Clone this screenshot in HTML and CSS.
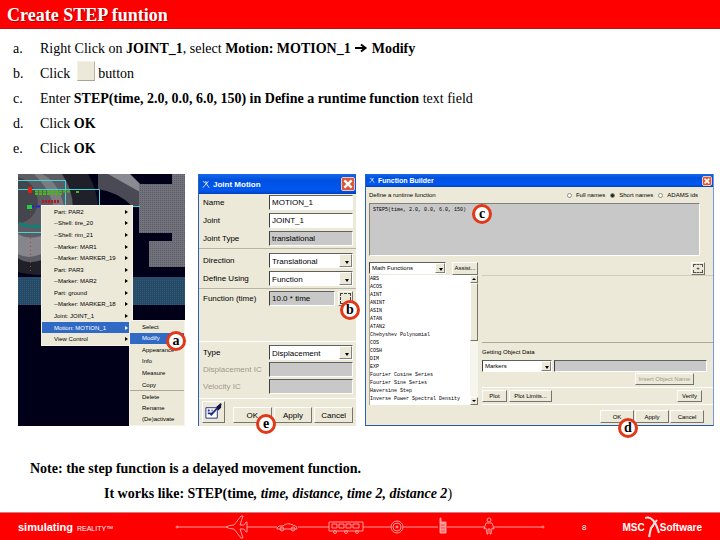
FILE: index.html
```html
<!DOCTYPE html>
<html lang="en">
  <head>
    <meta charset="UTF-8" />
    <meta name="viewport" content="width=device-width, initial-scale=1.0" />
    <title>Create STEP funtion</title>
    <link rel="stylesheet" href="styles.css">
  </head>
  <body>
    <header class="title-bar">
      <h1>Create STEP funtion</h1>
    </header>

    <main>
      <ul class="steps">
        <li><span class="letter">a.</span><span>Right Click on <b>JOINT_1</b>, select <b>Motion: MOTION_1 <svg class="arrow" viewBox="0 0 14 10"><path d="M1 5H11M7 1.5L11.5 5L7 8.5" /></svg> Modify</b></span></li>
        <li><span class="letter">b.</span><span>Click</span><button class="blank" type="button" aria-label="Function"></button><span>button</span></li>
        <li><span class="letter">c.</span><span>Enter <b>STEP(time, 2.0, 0.0, 6.0, 150) in Define a runtime function</b> text field</span></li>
        <li><span class="letter">d.</span><span>Click <b>OK</b></span></li>
        <li><span class="letter">e.</span><span>Click <b>OK</b></span></li>
      </ul>

      <div class="figures">
        <!-- model view with the context menu -->
        <section class="scene">
          <svg class="model" viewBox="0 0 167 252" preserveAspectRatio="none">
            <defs>
              <pattern id="dots" width="2" height="2" patternUnits="userSpaceOnUse">
                <rect width="2" height="2" fill="#72727c" />
                <rect width="1" height="1" fill="#5c5c68" />
              </pattern>
              <pattern id="floor" width="2" height="2" patternUnits="userSpaceOnUse">
                <rect width="2" height="2" fill="#234a68" />
                <rect width="1" height="1" fill="#36596e" />
              </pattern>
            </defs>
            <rect width="167" height="252" fill="#000018" />
            <rect y="103" width="167" height="28" fill="url(#floor)" />
            <path d="M0 0H70Q82 20 80 45Q75 80 40 98Q20 104 0 98Z" fill="#20202a" />
            <path d="M0 0H44Q58 20 54 45Q44 82 20 87Q8 90 0 84Z" fill="#5c5c64" />
            <path d="M0 3Q18 8 20 28Q18 46 0 50Z" fill="#45454e" />
            <path d="M24 0Q44 10 47 40L38 62Q42 25 16 0Z" fill="#7b7b82" />
            <path d="M0 60Q10 66 23 62V80Q10 86 0 80Z" fill="#85858b" />
            <path d="M80 0H112L122 10V33L114 32Q100 18 80 15Z" fill="#4a4a55" />
            <path d="M90 0H112L122 10V18Z" fill="#8a8a92" />
            <path d="M154 0H167V93H131V67H154V59H121V10H154Z" fill="url(#dots)" />
            <g fill="none" stroke="#45d5d8">
              <path d="M0 6.500H47.500V32M0 15.500H81.500V32M23 32.500H122M0 58.500H23" />
              <path d="M1 49Q10 54 23 52" stroke="#108078" stroke-width="3" />
            </g>
            <path d="M12.500 36V100" stroke="#a04040" stroke-dasharray="1 3" />
            <path d="M12 32.500H40" stroke="#2020e0" stroke-width="2" stroke-dasharray="4 2" />
            <path d="M10 13H14V19H10Z" fill="#e02010" />
            <path d="M17 17.500H52M17 20H45M58 18H62" stroke="#48b818" stroke-width="2" stroke-dasharray="3 1" />
            <path d="M24 27.500H42" stroke="#b01828" stroke-width="3" stroke-dasharray="2 1" />
            <path d="M9 31H14V35H9Z" fill="#20d040" />
          </svg>
          <ul class="menu main-menu">
            <li class="more">Part: PAR2</li>
            <li class="more">--Shell: tire_20</li>
            <li class="more">--Shell: rim_21</li>
            <li class="more">--Marker: MAR1</li>
            <li class="more">--Marker: MARKER_19</li>
            <li class="more">Part: PAR3</li>
            <li class="more">--Marker: MAR2</li>
            <li class="more">Part: ground</li>
            <li class="more">--Marker: MARKER_18</li>
            <li class="more">Joint: JOINT_1</li>
            <li class="more active">Motion: MOTION_1</li>
            <li class="more">View Control</li>
          </ul>
          <ul class="menu sub-menu">
            <li>Select</li>
            <li class="active">Modify</li>
            <li>Appearance</li>
            <li>Info</li>
            <li>Measure</li>
            <li>Copy</li>
            <li class="divided">Delete</li>
            <li>Rename</li>
            <li>(De)activate</li>
          </ul>
          <span class="badge badge-a">a</span>
        </section>

        <!-- Joint Motion dialog -->
        <section class="dialog joint">
          <div class="caption">
            <svg class="app-icon" viewBox="0 0 10 10"><path d="M1 1Q5 2 9 9M8 1L1 9M4 1L7 3" /></svg>
            <h2>Joint Motion</h2>
            <button class="close" type="button" aria-label="Close"><svg viewBox="0 0 10 10"><path d="M2 2L8 8M8 2L2 8" /></svg></button>
          </div>
          <form class="joint-form">
            <div class="group">
              <label for="name">Name</label><input id="name" type="text" value="MOTION_1" />
              <label for="joint">Joint</label><input id="joint" type="text" value="JOINT_1" />
              <label for="jtype">Joint Type</label><input id="jtype" class="gray" type="text" value="translational" readonly />
            </div>
            <div class="group second">
              <label for="dir">Direction</label><span class="drop"><select id="dir"><option>Translational</option></select></span>
              <label for="using">Define Using</label><span class="drop"><select id="using"><option>Function</option></select></span>
            </div>
            <div class="group stretch">
              <label for="fn">Function (time)</label>
              <span class="with-button"><input id="fn" class="gray" type="text" value="10.0 * time" readonly /><button class="raised dots" type="button" aria-label="Build function"></button></span>
            </div>
            <div class="group last">
              <label for="type">Type</label><span class="drop"><select id="type"><option>Displacement</option></select></span>
              <label class="off" for="disp">Displacement IC</label><input id="disp" class="gray" type="text" disabled />
              <label class="off" for="vel">Velocity IC</label><input id="vel" class="gray" type="text" disabled />
            </div>
            <div class="actions">
              <button class="raised note-icon" type="button" aria-label="Comments">
                <svg viewBox="0 0 20 20"><path d="M2 6H14V17H2Z" fill="#fff" stroke="#203080" /><path d="M4 9H6M8 9H9M4 12H8M7 14L18 2" fill="none" stroke="#203080" stroke-width="2" /><path d="M13 5L18 1V6L15 9Z" fill="#101840" /></svg>
              </button>
              <button class="raised" type="button">OK</button>
              <button class="raised" type="button">Apply</button>
              <button class="raised" type="button">Cancel</button>
            </div>
          </form>
          <span class="badge badge-b">b</span>
          <span class="badge badge-e">e</span>
        </section>

        <!-- Function Builder dialog -->
        <section class="dialog builder">
          <div class="caption">
            <svg class="app-icon" viewBox="0 0 10 10"><path d="M1 1Q5 2 9 9M8 1L1 9M4 1L7 3" /></svg>
            <h2>Function Builder</h2>
            <button class="close" type="button" aria-label="Close"><svg viewBox="0 0 10 10"><path d="M2 2L8 8M8 2L2 8" /></svg></button>
          </div>
          <form class="builder-form">
            <div class="define">
              <label for="runtime">Define a runtime function</label>
              <span class="radios">
                <label><input type="radio" name="names" />Full names</label>
                <label><input type="radio" name="names" checked />Short names</label>
                <label><input type="radio" name="names" />ADAMS ids</label>
              </span>
            </div>
            <textarea id="runtime" spellcheck="false">STEP5(time, 2.0, 0.0, 6.0, 150)</textarea>
            <div class="assist">
              <span class="drop"><select aria-label="Function category"><option>Math Functions</option></select></span>
              <button class="raised" type="button">Assist...</button>
              <button class="raised plus" type="button"><span>+</span></button>
            </div>
            <div class="work">
              <div class="functions">
                <ul>
                  <li>ABS</li>
                  <li>ACOS</li>
                  <li>AINT</li>
                  <li>ANINT</li>
                  <li>ASIN</li>
                  <li>ATAN</li>
                  <li>ATAN2</li>
                  <li>Chebyshev Polynomial</li>
                  <li>COS</li>
                  <li>COSH</li>
                  <li>DIM</li>
                  <li>EXP</li>
                  <li>Fourier Cosine Series</li>
                  <li>Fourier Sine Series</li>
                  <li>Haversine Step</li>
                  <li>Inverse Power Spectral Density</li>
                </ul>
                <div class="scroll">
                  <span class="raised up"></span>
                  <span class="raised thumb"></span>
                  <span class="track"></span>
                  <span class="raised down"></span>
                </div>
              </div>
              <div class="side">
                <div class="space"></div>
                <div class="object">
                  <label for="object">Getting Object Data</label>
                  <div class="object-row">
                    <span class="drop"><select id="object"><option>Markers</option></select></span>
                    <input class="gray" type="text" aria-label="Object name" disabled />
                  </div>
                  <button class="raised insert" type="button" disabled>Insert Object Name</button>
                </div>
                <div class="plots">
                  <button class="raised" type="button">Plot</button>
                  <button class="raised limits" type="button">Plot Limits...</button>
                  <button class="raised verify" type="button">Verify</button>
                </div>
              </div>
            </div>
            <div class="actions">
              <button class="raised" type="button">OK</button>
              <button class="raised" type="button">Apply</button>
              <button class="raised" type="button">Cancel</button>
            </div>
          </form>
          <span class="badge badge-c">c</span>
          <span class="badge badge-d">d</span>
        </section>
      </div>

      <div class="notes">
        <p>Note: the step function is a delayed movement function.</p>
        <p class="indent">It works like: STEP(time<i>, time, distance, time 2, distance 2</i><span>)</span></p>
      </div>
    </main>

    <footer>
      <p class="tagline"><b>simulating</b> REALITY™</p>
      <svg class="timeline" viewBox="0 0 372 26">
        <path d="M3 13H52M73 13H103M124 13H155M189 13H217M229 13H264M273 13H310M320 13H368" />
        <circle cx="3" cy="13" r="1" />
        <circle cx="369" cy="13" r="1" />
        <path d="M52 13Q55 11 60 11L67 2H69L66 11H70L72 8H73V18H72L70 15H66L69 24H67L60 15Q55 15 52 13Z" />
        <path d="M103 14Q104 11 109 12Q113 8 119 11Q124 12 123 15H103Z" />
        <circle cx="108" cy="15" r="2" />
        <circle cx="119" cy="15" r="2" />
        <path d="M155 8H189V17H155ZM158 10H163V14H158ZM165 10H170V14H165ZM172 10H177V14H172ZM179 10H185V14H179Z" />
        <circle cx="161" cy="18" r="1.500" />
        <circle cx="172" cy="18" r="1.500" />
        <circle cx="183" cy="18" r="1.500" />
        <circle cx="223" cy="13" r="6" />
        <circle cx="223" cy="13" r="4" />
        <circle class="fill" cx="223" cy="13" r="1" />
        <path class="fill" d="M266 4H267V8H272V19H266Z" />
        <path d="M267 11H271M267 14H271M267 17H271" stroke="#ff4040" />
        <circle cx="315" cy="6" r="2" />
        <path d="M312 9H318L320 15L318 14L317 20H316V15H314V20H313L312 14L310 15Z" />
      </svg>
      <span class="page">8</span>
      <div class="logo">
        <span>MSC</span>
        <svg viewBox="0 0 15 24"><path d="M0 3Q9 0 14 18" stroke-width="2" /><path d="M3 2Q12 5 8 12Q3 16 5 22" /><path d="M12 5L6 13L4 22" stroke-width="2" /></svg>
        <span>Software</span>
      </div>
    </footer>
  </body>
</html>
```

FILE: styles.css
```css
* {
  box-sizing: border-box;
}
body {
  margin: 0;
  min-height: 100vh;
  display: flex;
  flex-direction: column;
  background: #ffffff;
  font-family: "Liberation Serif", "Times New Roman", serif;
  font-size: 14px;
  color: #000000;
}
h1,
h2,
p,
ul {
  margin: 0;
  padding: 0;
  list-style: none;
}
button,
input,
select,
textarea {
  margin: 0;
  padding: 0;
  border: 0;
  border-radius: 0;
  font: inherit;
  color: inherit;
}
main {
  flex: 1;
}

/* header */
.title-bar {
  height: 29px;
  padding: 5px 7px;
  background: #ff0000;
  border-bottom: 1px solid #c01010;
}
.title-bar h1 {
  font-size: 18px;
  line-height: 20px;
  color: #ffffff;
  text-shadow: 1px 1px 1px #a00000;
}

/* steps */
.steps {
  padding: 7px 13px 0;
}
.steps li {
  display: flex;
  align-items: center;
  height: 25px;
}
.letter {
  width: 27px;
}
.arrow {
  width: 14px;
  height: 10px;
  fill: none;
  stroke: #000000;
  stroke-width: 2;
}
.blank {
  width: 18px;
  height: 20px;
  margin: 0 3px 6px 7px;
  background: #ece9d8;
  border: 1px solid #f4f2e8;
  border-right-color: #b8b4a4;
  border-bottom-color: #a8a494;
}

/* three screens */
.figures {
  display: grid;
  grid-template-columns: 171fr 158fr 349fr;
  column-gap: 9px;
  height: 252px;
  margin: 13px 6px 0 18px;
  font-family: "Liberation Sans", Arial, sans-serif;
}
.scene,
.dialog {
  position: relative;
  min-width: 0;
}
.scene {
  margin-right: 4px;
}
.model {
  display: block;
  width: 100%;
  height: 100%;
}
.menu {
  position: absolute;
  display: grid;
  grid-auto-rows: 1fr;
  background: #ece9d8;
  border: 1px solid #f6f4ea;
  font-size: 6px;
  white-space: nowrap;
}
.menu li {
  display: flex;
  align-items: center;
  justify-content: space-between;
}
.menu .active {
  background: #316ac5;
  color: #ffffff;
}
.menu .divided {
  border-top: 1px solid #aca899;
}
.more::after {
  content: "";
  border: 2px solid transparent;
  border-left: 3px solid currentColor;
  border-right: 0;
}
.main-menu {
  left: 23px;
  top: 31px;
  width: 92px;
  height: 141px;
}
.main-menu li {
  padding: 0 4px 0 12px;
}
.sub-menu {
  right: 0;
  bottom: 0;
  width: 56px;
  height: 106px;
}
.sub-menu li {
  padding-left: 12px;
}

/* numbered rings */
.badge {
  position: absolute;
  width: 20px;
  height: 20px;
  border: 3px solid #e03818;
  border-radius: 50%;
  background: #ffffff;
  font: bold 14px/13px "Liberation Serif", serif;
  text-align: center;
}
.badge-a {
  right: -1px;
  top: 157px;
}
.badge-b {
  right: -4px;
  top: 126px;
}
.badge-e {
  left: 57px;
  bottom: -8px;
}
.badge-c {
  left: 106px;
  top: 30px;
}
.badge-d {
  right: 75px;
  bottom: -13px;
}

/* dialogs */
.dialog {
  display: flex;
  flex-direction: column;
  background: #ece9d8;
  border-left: 1px solid #2a60b8;
}
.dialog form {
  flex: 1;
  display: flex;
  flex-direction: column;
}
.caption {
  display: flex;
  align-items: center;
  gap: 3px;
  height: 20px;
  padding: 0 1px 0 3px;
  background: linear-gradient(#1868e8, #0050e0 30%, #0058f0 80%, #0040c0);
  color: #ffffff;
}
.caption h2 {
  flex: 1;
  font-size: 8px;
}
.app-icon {
  width: 8px;
  height: 9px;
  fill: none;
  stroke: #ffffff;
}
.close {
  width: 14px;
  height: 14px;
  background: #d85838;
  border: 1px solid #f0c8c0;
  border-radius: 2px;
}
.close svg {
  display: block;
  width: 100%;
  height: 100%;
  stroke: #ffffff;
  stroke-width: 2;
}
.dialog input[type="text"],
.drop {
  min-width: 0;
  width: 100%;
  background: #ffffff;
  border: 1px solid #ffffff;
  border-top-color: #606060;
  border-left-color: #404040;
}
.dialog input.gray {
  background: #c8c8c8;
}
.drop {
  display: flex;
  position: relative;
}
.drop select {
  flex: 1;
  min-width: 0;
  appearance: none;
  background: transparent;
}
.drop::after {
  content: "";
  position: absolute;
  right: 6px;
  top: 50%;
  border: 2px solid transparent;
  border-top: 3px solid #000000;
  border-bottom: 0;
}
.drop::before {
  content: "";
  position: absolute;
  right: 0;
  top: 0;
  bottom: 0;
  width: 10px;
  background: #ece9d8;
  border: 1px solid #ffffff;
  border-right-color: #808080;
  border-bottom-color: #808080;
}
.raised {
  background: #ece9d8;
  border: 1px solid #ffffff;
  border-right-color: #77756a;
  border-bottom-color: #77756a;
  white-space: nowrap;
}

/* joint motion */
.joint {
  font-size: 8px;
}
.group {
  display: grid;
  grid-template-columns: 66px 1fr;
  grid-auto-rows: 15px;
  gap: 3px 0;
  align-items: center;
  padding: 1px 3px 2px 4px;
  border-bottom: 1px solid #b8b4a4;
  white-space: nowrap;
}
.group > * {
  height: 15px;
  line-height: 15px;
}
.second {
  padding-top: 4px;
}
.stretch {
  flex: 1;
  align-content: start;
  padding-top: 2px;
  border-bottom-color: #ffffff;
}
.last {
  row-gap: 2px;
  padding-top: 3px;
  padding-bottom: 4px;
  border-bottom-color: #ffffff;
}
.joint input,
.joint select {
  padding-left: 2px;
}
.joint .drop::before {
  width: 11px;
}
.joint .drop::after {
  right: 3px;
}
.off {
  color: #9c998a;
}
.with-button {
  display: flex;
  gap: 3px;
}
.with-button .dots {
  flex: none;
  width: 15px;
}
.dots::before {
  content: "";
  display: block;
  margin: 1px;
  height: 9px;
  border: 1px dashed #404040;
}
.joint .actions {
  display: flex;
  align-items: flex-end;
  gap: 2px;
  height: 27px;
  padding: 0 3px 3px;
}
.joint .actions .raised {
  flex: 1;
  height: 16px;
}
.joint .actions .note-icon {
  flex: none;
  width: 23px;
  height: 22px;
  margin-right: 6px;
}
.note-icon svg {
  width: 19px;
  height: 19px;
}

/* function builder */
.builder {
  font-size: 6px;
  border-right: 1px solid #7898d8;
  border-bottom: 1px solid #2858a0;
}
.builder .caption {
  height: 13px;
}
.builder h2 {
  font-size: 7px;
}
.builder .app-icon {
  width: 6px;
  height: 7px;
}
.builder .close {
  width: 10px;
  height: 10px;
}
.define {
  display: flex;
  align-items: center;
  justify-content: space-between;
  height: 16px;
  padding: 0 15px 0 3px;
}
.radios {
  display: flex;
  gap: 5px;
}
.radios label {
  display: flex;
  align-items: center;
  gap: 4px;
}
.radios input {
  appearance: none;
  width: 5px;
  height: 5px;
  border: 1px solid #908d80;
  border-radius: 50%;
  background: #ffffff;
}
.radios input:checked {
  background: #202020;
}
.builder textarea {
  display: block;
  height: 53px;
  margin: 0 13px 0 3px;
  padding: 3px;
  resize: none;
  background: #c8c8c8;
  border: 1px solid #ffffff;
  border-top-color: #808080;
  border-left-color: #808080;
  font: 5px/6px "Liberation Mono", monospace;
}
.assist {
  display: flex;
  align-items: center;
  gap: 6px;
  height: 19px;
  padding: 5px 8px 0 3px;
}
.assist .drop {
  width: 77px;
  height: 12px;
}
.assist .raised {
  width: 26px;
  height: 13px;
}
.assist .plus {
  width: 14px;
  margin-left: auto;
}
.plus span {
  display: block;
  margin: 1px;
  border: 1px dashed #505050;
  line-height: 7px;
}
.builder select {
  padding-left: 2px;
}
.builder .drop::before {
  width: 8px;
}
.builder .drop::after {
  right: 2px;
}
.work {
  flex: 1;
  display: flex;
  gap: 4px;
  padding-left: 3px;
}
.functions {
  flex: none;
  display: flex;
  width: 109px;
  background: #ffffff;
  border-left: 1px solid #aca899;
}
.functions ul {
  flex: 1;
  min-width: 0;
  font: 5px/8px "Liberation Mono", monospace;
  white-space: nowrap;
}
.scroll {
  display: flex;
  flex-direction: column;
  width: 8px;
}
.up,
.down {
  display: flex;
  align-items: center;
  justify-content: center;
  height: 8px;
}
.up::after,
.down::after {
  content: "";
  border: 2px solid transparent;
}
.up::after {
  border-top: 0;
  border-bottom: 2px solid #000000;
}
.down::after {
  border-bottom: 0;
  border-top: 2px solid #000000;
}
.thumb {
  height: 58px;
}
.track {
  flex: 1;
  background: #f6f5ee;
}
.side {
  flex: 1;
  min-width: 0;
  display: flex;
  flex-direction: column;
  border-top: 1px solid #d0ccbc;
}
.space {
  flex: 1;
}
.object {
  display: flex;
  flex-direction: column;
  height: 46px;
  padding: 5px 6px 0 0;
  border-top: 1px solid #aca899;
  border-bottom: 1px solid #ffffff;
}
.object label {
  height: 12px;
  line-height: 8px;
}
.object-row {
  display: flex;
  gap: 2px;
}
.object-row > * {
  height: 12px;
}
.object-row .drop {
  flex: none;
  width: 70px;
}
.insert {
  align-self: flex-end;
  width: 59px;
  height: 12px;
  margin: 1px 13px 0 0;
  color: #9c998a;
}
.plots {
  display: flex;
  align-items: center;
  gap: 2px;
  height: 17px;
  padding: 0 11px 0 0;
  border-bottom: 1px solid #ffffff;
}
.plots .raised {
  width: 25px;
  height: 12px;
}
.plots .limits {
  width: 43px;
}
.plots .verify {
  margin-left: auto;
}
.builder .actions {
  display: flex;
  justify-content: flex-end;
  align-items: center;
  gap: 1px;
  height: 20px;
  padding: 3px 9px 0 0;
}
.builder .actions .raised {
  width: 34px;
  height: 13px;
}

/* notes */
.notes {
  padding: 30px 30px 0;
  font-weight: bold;
  line-height: 25px;
}
.notes .indent {
  padding-left: 74px;
}
.notes span {
  font-weight: normal;
}

/* footer */
footer {
  display: flex;
  align-items: center;
  height: 28px;
  padding: 1px 18px 0 18px;
  background: #ff0000;
  border-top: 1px solid #d08080;
  font-family: "Liberation Sans", Arial, sans-serif;
  color: #ffffff;
}
.tagline {
  width: 156px;
  font-size: 7px;
  white-space: nowrap;
}
.tagline b {
  margin-right: 2px;
  font-size: 11px;
}
.timeline {
  width: 372px;
  height: 26px;
  fill: none;
  stroke: #ff9c9c;
}
.timeline .fill {
  fill: #ff9c9c;
}
.page {
  margin: 0 auto;
  font-size: 8px;
}
.logo {
  display: flex;
  align-items: center;
  font-size: 10px;
  font-weight: bold;
}
.logo svg {
  width: 15px;
  height: 24px;
  fill: none;
  stroke: #ffe0e0;
}
```
